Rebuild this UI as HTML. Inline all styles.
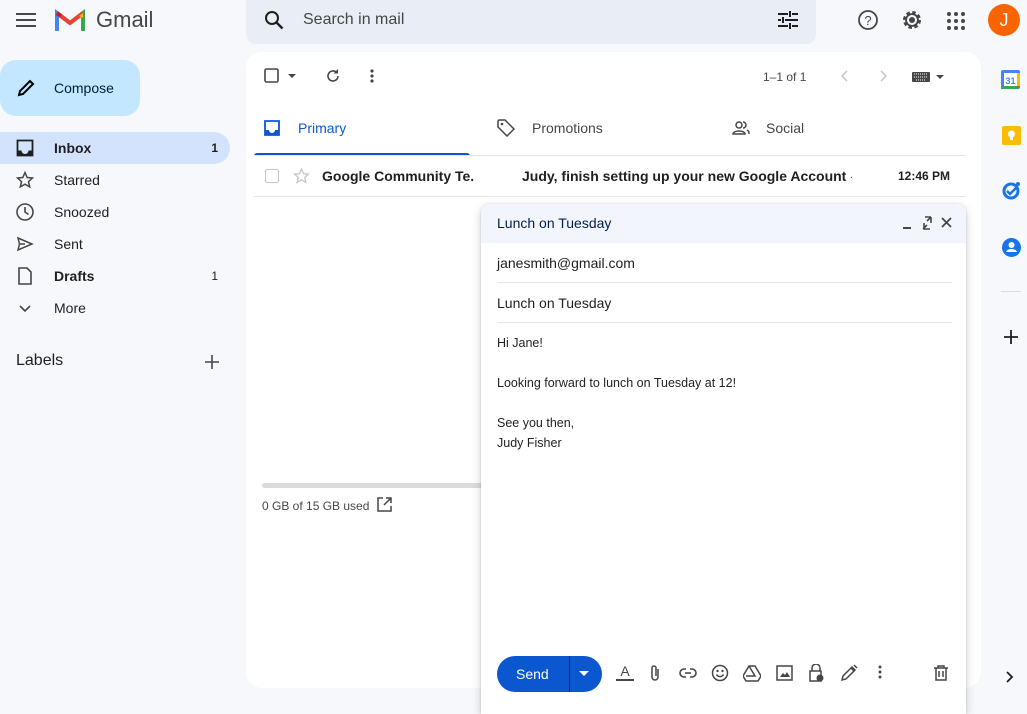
<!DOCTYPE html>
<html><head><meta charset="utf-8"><style>
*{box-sizing:border-box;margin:0;padding:0}
body{width:1027px;height:704px;overflow:hidden;background:#f6f8fc;font-family:"Liberation Sans",Arial,sans-serif;color:#1f1f1f;position:relative;font-size:14px}
.abs{position:absolute}
svg{display:block}
.nav{position:absolute;left:0;width:230px;height:32px;display:flex;align-items:center;font-size:14px;color:#1f1f1f}
.nav .ic{position:absolute;left:16px;top:7px}
.nav .t{position:absolute;left:54px}
.nav .n{position:absolute;right:12px;font-size:12px}
.tb{position:absolute;top:664px}
</style></head><body>
<div class="abs" style="left:16px;top:13px"><svg width="20" height="14"><path d="M0 1h20M0 7h20M0 13h20" stroke="#444746" stroke-width="2"/></svg></div>
<div class="abs" style="left:55px;top:9px"><svg width="30" height="22" viewBox="0 0 30 22">
<path d="M2 22V4l13 10" fill="none" stroke="#4285f4" stroke-width="4"/>
<path d="M28 22V4L15 14" fill="none" stroke="#34a853" stroke-width="4"/>
<path d="M2 4l13 10 13-10" fill="none" stroke="#ea4335" stroke-width="4"/>
<path d="M24 7l4-3v5" fill="#fbbc04"/><path d="M2 4l4 3" stroke="#c5221f" stroke-width="4"/></svg></div>
<div class="abs" style="left:96px;top:7px;font-size:22px;color:#444746">Gmail</div>
<div class="abs" style="left:246px;top:0;width:570px;height:44px;background:#e9eef6;border-radius:0 0 10px 10px"></div>
<div class="abs" style="left:264px;top:10px"><svg width="20" height="20"><circle cx="8" cy="8" r="6" fill="none" stroke="#1f1f1f" stroke-width="2"/><path d="M12.5 12.5l6 6" stroke="#1f1f1f" stroke-width="2.4"/></svg></div>
<div class="abs" style="left:303px;top:11px;font-size:16px;color:#444746">Search in mail</div>
<div class="abs" style="left:778px;top:11px"><svg width="20" height="18"><path d="M0 3h10M14 3h6M12 0v6M0 9h3M7 9h13M5 6v6M0 15h10M14 15h6M12 12v6" stroke="#1f1f1f" stroke-width="2"/></svg></div>
<div class="abs" style="left:858px;top:10px"><svg width="20" height="20"><circle cx="10" cy="10" r="9" fill="none" stroke="#444746" stroke-width="1.8"/><text x="10" y="15" font-size="13" text-anchor="middle" fill="#444746" font-family="Liberation Sans">?</text></svg></div>
<div class="abs" style="left:901px;top:9px"><svg width="22" height="22" viewBox="0 0 22 22"><circle cx="11" cy="11" r="7" fill="none" stroke="#444746" stroke-width="4" stroke-dasharray="3.2 2.3"/><circle cx="11" cy="11" r="6" fill="none" stroke="#444746" stroke-width="1.8"/><circle cx="11" cy="11" r="3" fill="#444746"/></svg></div>
<div class="abs" style="left:947px;top:12px"><svg width="18" height="18"><g fill="#444746"><circle cx="2" cy="2" r="2"/><circle cx="9" cy="2" r="2"/><circle cx="16" cy="2" r="2"/><circle cx="2" cy="9" r="2"/><circle cx="9" cy="9" r="2"/><circle cx="16" cy="9" r="2"/><circle cx="2" cy="16" r="2"/><circle cx="9" cy="16" r="2"/><circle cx="16" cy="16" r="2"/></g></svg></div>
<div class="abs" style="left:988px;top:4px;width:32px;height:32px;border-radius:50%;background:#fa6400;color:#fff;font-size:18px;text-align:center;line-height:32px">J</div>
<div class="abs" style="left:0;top:60px;width:140px;height:56px;background:#c2e7ff;border-radius:16px"></div>
<div class="abs" style="left:17px;top:79px"><svg width="18" height="18"><path d="M2 16l1-4L13 2l3 3L6 15z" fill="none" stroke="#000" stroke-width="2"/></svg></div>
<div class="abs" style="left:54px;top:80px;font-size:14px;color:#001d35">Compose</div>
<div class="nav" style="top:132px;background:#d3e3fd;border-radius:0 16px 16px 0;font-weight:bold"><span class="ic"><svg width="18" height="18"><path d="M1.5 1.5h15v15h-15z" fill="none" stroke="#1f1f1f" stroke-width="1.8"/><path d="M1.5 11.5h4a3.5 3.5 0 0 0 7 0h4v5h-15z" fill="#1f1f1f"/></svg></span><span class="t">Inbox</span><span class="n" style="font-weight:bold">1</span></div>
<div class="nav" style="top:164px"><span class="ic"><svg width="18" height="18"><path d="M9 1.5l2.2 5 5.3.5-4 3.6 1.2 5.3L9 13.2 4.3 15.9l1.2-5.3-4-3.6 5.3-.5z" fill="none" stroke="#444746" stroke-width="1.5"/></svg></span><span class="t">Starred</span></div>
<div class="nav" style="top:196px"><span class="ic"><svg width="18" height="18"><circle cx="9" cy="9" r="8" fill="none" stroke="#444746" stroke-width="1.6"/><path d="M9 4v5l3.5 2.5" fill="none" stroke="#444746" stroke-width="1.6"/></svg></span><span class="t">Snoozed</span></div>
<div class="nav" style="top:228px"><span class="ic"><svg width="18" height="18"><path d="M2 3l14 6-14 6 1.5-6z M3.5 9H9" fill="none" stroke="#444746" stroke-width="1.5"/></svg></span><span class="t">Sent</span></div>
<div class="nav" style="top:260px;font-weight:bold"><span class="ic"><svg width="18" height="18"><path d="M3 1h8l4 4v12H3z" fill="none" stroke="#444746" stroke-width="1.6"/></svg></span><span class="t">Drafts</span><span class="n" style="font-weight:normal">1</span></div>
<div class="nav" style="top:292px"><span class="ic"><svg width="18" height="18"><path d="M4 7l5 5 5-5" fill="none" stroke="#444746" stroke-width="1.6"/></svg></span><span class="t">More</span></div>
<div class="abs" style="left:16px;top:352px;font-size:16px">Labels</div>
<div class="abs" style="left:205px;top:355px"><svg width="14" height="14"><path d="M7 0v14M0 7h14" stroke="#444746" stroke-width="1.6"/></svg></div>
<div class="abs" style="left:246px;top:52px;width:735px;height:636px;background:#fff;border-radius:16px"></div>
<div class="abs" style="left:264px;top:68px"><svg width="36" height="16"><rect x="1" y="1" width="13" height="13" rx="1.5" fill="none" stroke="#444746" stroke-width="1.6"/><path d="M24 6h8l-4 4z" fill="#444746"/></svg></div>
<div class="abs" style="left:325px;top:68px"><svg width="16" height="16"><path d="M13 8a5 5 0 1 1-1.5-3.6" fill="none" stroke="#444746" stroke-width="1.6"/><path d="M13 1v4.5H8.5z" fill="#444746"/></svg></div>
<div class="abs" style="left:370px;top:69px"><svg width="4" height="14"><g fill="#444746"><circle cx="2" cy="2" r="1.6"/><circle cx="2" cy="7" r="1.6"/><circle cx="2" cy="12" r="1.6"/></g></svg></div>
<div class="abs" style="left:763px;top:70px;font-size:12px;color:#444746">1–1 of 1</div>
<div class="abs" style="left:840px;top:70px"><svg width="50" height="12"><path d="M7 1L2 6l5 5M41 1l5 5-5 5" fill="none" stroke="#c4c7c5" stroke-width="1.5"/></svg></div>
<div class="abs" style="left:912px;top:71px"><svg width="34" height="12"><rect x="0" y="1" width="18" height="10" rx="1" fill="#444746"/><path d="M2 3h14M2 6h14M4 9h10" stroke="#fff" stroke-width="1" stroke-dasharray="1 1"/><path d="M24 4h8l-4 4z" fill="#444746"/></svg></div>
<div class="abs" style="left:264px;top:120px"><svg width="16" height="16"><path d="M1 1h14v14H1z" fill="none" stroke="#0b57d0" stroke-width="1.8"/><path d="M1 10h4a3 3 0 0 0 6 0h4v5H1z" fill="#0b57d0"/></svg></div>
<div class="abs" style="left:298px;top:120px;color:#0b57d0;font-size:14px">Primary</div>
<div class="abs" style="left:254px;top:153px;width:216px;height:3px;background:#0b57d0;border-radius:3px 3px 0 0"></div>
<div class="abs" style="left:254px;top:155px;width:712px;height:1px;background:#e6e6e6"></div>
<div class="abs" style="left:497px;top:119px"><svg width="18" height="18"><path d="M1 2v6l9 9 7-7-9-9H2z" fill="none" stroke="#444746" stroke-width="1.5"/><circle cx="5" cy="5" r="1.3" fill="#444746"/></svg></div>
<div class="abs" style="left:532px;top:120px;color:#444746">Promotions</div>
<div class="abs" style="left:732px;top:120px"><svg width="18" height="16"><circle cx="7" cy="5" r="3" fill="none" stroke="#444746" stroke-width="1.5"/><path d="M1 14c0-4 12-4 12 0z" fill="none" stroke="#444746" stroke-width="1.5"/><path d="M11 2a3 3 0 0 1 0 6M15 10c2 1 2 2 2 4" fill="none" stroke="#444746" stroke-width="1.5"/></svg></div>
<div class="abs" style="left:766px;top:120px;color:#444746">Social</div>
<div class="abs" style="left:265px;top:169px;width:14px;height:14px;border:1.5px solid #c4c7c5;border-radius:2px"></div>
<div class="abs" style="left:293px;top:168px"><svg width="17" height="16"><path d="M8.5 1l2 4.7 5 .4-3.8 3.3 1.2 5L8.5 11.8 4.1 14.4l1.2-5L1.5 6.1l5-.4z" fill="none" stroke="#c4c7c5" stroke-width="1.3"/></svg></div>
<div class="abs" style="left:322px;top:168px;font-weight:bold;font-size:14px;color:#1f1f1f">Google Community Te.</div>
<div class="abs" style="left:522px;top:168px;font-weight:bold;font-size:14px;color:#1f1f1f;width:330px;white-space:nowrap;overflow:hidden">Judy, finish setting up your new Google Account <span style="font-weight:normal;color:#5f6368">- Hi Judy</span></div>
<div class="abs" style="left:898px;top:169px;font-weight:bold;font-size:12px">12:46 PM</div>
<div class="abs" style="left:254px;top:196px;width:712px;height:1px;background:#e6e6e6"></div>
<div class="abs" style="left:262px;top:483px;width:230px;height:5px;background:#dadce0;border-radius:3px"></div>
<div class="abs" style="left:262px;top:499px;font-size:12px;color:#444746">0 GB of 15 GB used</div>
<div class="abs" style="left:377px;top:497px"><svg width="15" height="15"><path d="M6 1H1v13h13V9M9 1h5v5M14 1L7 8" fill="none" stroke="#444746" stroke-width="1.5"/></svg></div>
<div class="abs" style="left:1001px;top:70px"><svg width="19" height="19"><rect x="0" y="0" width="19" height="19" rx="2" fill="#4285f4"/><rect x="3" y="3" width="13" height="13" fill="#fff"/><rect x="0" y="16" width="16" height="3" fill="#34a853"/><rect x="16" y="3" width="3" height="13" fill="#fbbc04"/><path d="M16 16h3l-3 3z" fill="#ea4335"/><text x="9.5" y="14" font-size="9" text-anchor="middle" fill="#4285f4" font-family="Liberation Sans" font-weight="bold">31</text></svg></div>
<div class="abs" style="left:1002px;top:126px"><svg width="19" height="19"><rect width="19" height="19" rx="2" fill="#fbbc04"/><circle cx="9.5" cy="8" r="3.5" fill="#fff"/><rect x="8" y="11" width="3" height="3" fill="#fff"/></svg></div>
<div class="abs" style="left:1002px;top:181px"><svg width="19" height="19"><circle cx="9" cy="10" r="7" fill="none" stroke="#1a73e8" stroke-width="3"/><path d="M5 10l3 3 7-7" fill="none" stroke="#1a73e8" stroke-width="2.5"/><circle cx="16" cy="3" r="2" fill="#1a73e8"/></svg></div>
<div class="abs" style="left:1002px;top:238px"><svg width="19" height="19"><circle cx="9.5" cy="9.5" r="9.5" fill="#1a73e8"/><circle cx="9.5" cy="7" r="3" fill="#fff"/><path d="M4 14c1-4 10-4 11 0z" fill="#fff"/></svg></div>
<div class="abs" style="left:1001px;top:291px;width:20px;height:1px;background:#dadce0"></div>
<div class="abs" style="left:1004px;top:330px"><svg width="14" height="14"><path d="M7 0v14M0 7h14" stroke="#1f1f1f" stroke-width="1.8"/></svg></div>
<div class="abs" style="left:1006px;top:671px"><svg width="8" height="12"><path d="M1 1l5 5-5 5" fill="none" stroke="#1f1f1f" stroke-width="1.8"/></svg></div>
<div class="abs" style="left:481px;top:204px;width:485px;height:510px;background:#fff;border-radius:8px 8px 0 0;box-shadow:0 4px 10px rgba(0,0,0,.18),0 0 2px rgba(0,0,0,.15)"></div>
<div class="abs" style="left:481px;top:204px;width:485px;height:39px;background:#f2f6fc;border-radius:8px 8px 0 0"></div>
<div class="abs" style="left:497px;top:215px;font-size:14px;color:#041e49">Lunch on Tuesday</div>
<div class="abs" style="left:902px;top:216px"><svg width="52" height="14"><path d="M1 12h8" stroke="#444746" stroke-width="2"/><path d="M21 13l4-4M29 1l-4 4M22 7v6h6M29 1h-6M29 1v6" fill="none" stroke="#444746" stroke-width="1.6"/><path d="M40 2l9 9M49 2l-9 9" stroke="#444746" stroke-width="1.8"/></svg></div>
<div class="abs" style="left:497px;top:255px;font-size:14px">janesmith@gmail.com</div>
<div class="abs" style="left:497px;top:282px;width:455px;height:1px;background:#e6e6e6"></div>
<div class="abs" style="left:497px;top:295px;font-size:14px">Lunch on Tuesday</div>
<div class="abs" style="left:497px;top:322px;width:455px;height:1px;background:#e6e6e6"></div>
<div class="abs" style="left:497px;top:333px;font-size:12.5px;line-height:20px;color:#222">Hi Jane!<br><br>Looking forward to lunch on Tuesday at 12!<br><br>See you then,<br>Judy Fisher</div>
<div class="abs" style="left:497px;top:656px;width:105px;height:36px;background:#0b57d0;border-radius:18px"></div>
<div class="abs" style="left:569px;top:656px;width:1px;height:36px;background:#041e49"></div>
<div class="abs" style="left:516px;top:666px;color:#fff;font-size:14px">Send</div>
<div class="abs" style="left:579px;top:671px"><svg width="10" height="6"><path d="M0 0h10L5 5z" fill="#fff"/></svg></div>
<div class="tb" style="left:616px"><svg width="18" height="18"><text x="9" y="12" font-size="14" text-anchor="middle" fill="#444746" font-family="Liberation Sans">A</text><rect x="0" y="15" width="18" height="2" fill="#444746"/></svg></div>
<div class="tb" style="left:648px"><svg width="14" height="18"><path d="M10 5v8a3 3 0 0 1-6 0V4a2 2 0 0 1 4 0v8" fill="none" stroke="#444746" stroke-width="1.5"/></svg></div>
<div class="tb" style="left:679px"><svg width="18" height="18"><path d="M7 5H5a4 4 0 0 0 0 8h2M11 5h2a4 4 0 0 1 0 8h-2M6 9h6" fill="none" stroke="#444746" stroke-width="1.6"/></svg></div>
<div class="tb" style="left:711px"><svg width="18" height="18"><circle cx="9" cy="9" r="7.5" fill="none" stroke="#444746" stroke-width="1.5"/><circle cx="6.5" cy="7" r="1.2" fill="#444746"/><circle cx="11.5" cy="7" r="1.2" fill="#444746"/><path d="M5.5 10.5a4 4 0 0 0 7 0" fill="none" stroke="#444746" stroke-width="1.5"/></svg></div>
<div class="tb" style="left:743px"><svg width="18" height="18"><path d="M6 2h6l6 10-3 5H3L0 12z M6 2l6 10H3" fill="none" stroke="#444746" stroke-width="1.5"/></svg></div>
<div class="tb" style="left:776px"><svg width="18" height="18"><rect x="1" y="2" width="15" height="14" fill="none" stroke="#444746" stroke-width="1.5"/><path d="M4 13l3-4 2 2 2-3 3 5z" fill="#444746"/></svg></div>
<div class="tb" style="left:807px"><svg width="18" height="18"><path d="M5 7V4a4 4 0 0 1 8 0v3" fill="none" stroke="#444746" stroke-width="1.5"/><rect x="3" y="7" width="11" height="10" fill="none" stroke="#444746" stroke-width="1.5"/><circle cx="13" cy="14" r="3.5" fill="#444746"/></svg></div>
<div class="tb" style="left:840px"><svg width="18" height="18"><path d="M2 16l1-4L12 3l3 3-9 9zM11 4l3 3M14 1l3 3" fill="none" stroke="#444746" stroke-width="1.5"/></svg></div>
<div class="tb" style="left:878px"><svg width="4" height="16"><g fill="#444746"><circle cx="2" cy="3" r="1.5"/><circle cx="2" cy="8" r="1.5"/><circle cx="2" cy="13" r="1.5"/></g></svg></div>
<div class="tb" style="left:933px"><svg width="16" height="18"><path d="M1 4h14M5 4V2h6v2M3 4v12h10V4M6 7v6M10 7v6" fill="none" stroke="#444746" stroke-width="1.5"/></svg></div>
</body></html>
